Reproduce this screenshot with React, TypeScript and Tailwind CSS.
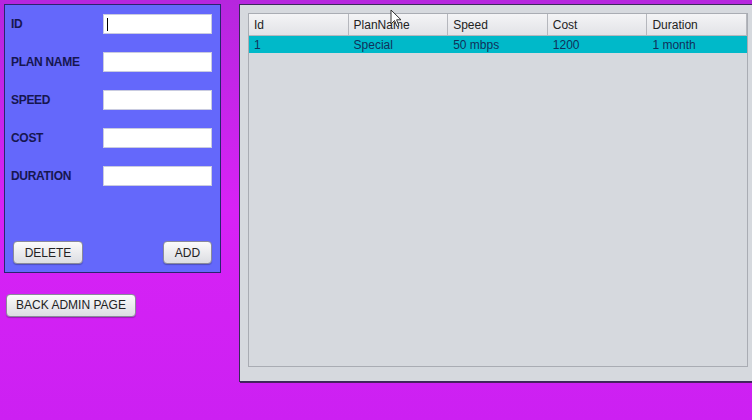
import { ReactNode } from 'react';

const fields = ['ID', 'PLAN NAME', 'SPEED', 'COST', 'DURATION'];
const columns = ['Id', 'PlanName', 'Speed', 'Cost', 'Duration'];
const rows = [['1', 'Special', '50 mbps', '1200', '1 month']];

function SwingButton({ children, className = '' }: { children: ReactNode; className?: string }) {
  return (
    <button
      className={`h-[23px] rounded-[4px] border border-[#8a8a9a] bg-gradient-to-b from-[#fbfbfb] to-[#dcdde2] text-[12px] text-[#222] shadow-[0_1px_1px_rgba(0,0,0,0.25)] ${className}`}
    >
      {children}
    </button>
  );
}

export default function App() {
  return (
    <div
      className="relative w-[752px] h-[420px] overflow-hidden bg-gradient-to-b from-[#b626de] via-[#d822f6] to-[#cc20f2] flex gap-[18px] pl-[4px] pt-[4px]"
      style={{ fontFamily: '"Liberation Sans", Arial, sans-serif' }}
    >
      {/* left column */}
      <div className="flex flex-col w-[217px] shrink-0">
        <div className="h-[269px] bg-[#6468fb] border border-[#2a2470] flex flex-col pl-[6px] pr-[8px] pt-[9px] pb-[8px]">
          <div className="flex flex-col gap-[18px]">
            {fields.map((f, i) => (
              <div key={f} className="flex items-center justify-between h-[20px]">
                <span className="text-[12px] font-bold text-[#161650] tracking-[-0.3px]">{f}</span>
                <div className="w-[109px] h-[20px] bg-white border border-[#c9cbe0] flex items-center pl-[3px]">
                  {i === 0 && <div className="w-px h-[13px] bg-black" />}
                </div>
              </div>
            ))}
          </div>
          <div className="mt-auto flex justify-between pl-[2px]">
            <SwingButton className="w-[70px]">DELETE</SwingButton>
            <SwingButton className="w-[49px]">ADD</SwingButton>
          </div>
        </div>
        <div className="pt-[19px] pl-[2px]">
          <SwingButton className="w-[130px]">BACK ADMIN PAGE</SwingButton>
        </div>
      </div>

      {/* right table panel */}
      <div className="w-[520px] h-[378px] shrink-0 bg-[#d6d9de] border border-[#3a2a5a] shadow-[1px_1px_0_#4a2060] pl-[8px] pt-[8px]">
        <div className="w-[500px] h-[354px] border border-[#a9acb3] bg-[#d6d9de]">
          <div className="flex h-[22px] bg-gradient-to-b from-[#f4f4f6] to-[#e2e3e7] border-b border-[#b5b7bd]">
            {columns.map((c) => (
              <div key={c} className="w-[100px] border-r border-[#b5b7bd] pl-[5px] flex items-center text-[12px] text-[#222]">
                {c}
              </div>
            ))}
          </div>
          {rows.map((r) => (
            <div key={r[0]} className="flex h-[17px] bg-[#00b9c9]">
              {r.map((v, j) => (
                <div key={j} className="w-[100px] pl-[5px] flex items-center text-[12px] text-[#10305a]">
                  {v}
                </div>
              ))}
            </div>
          ))}
        </div>
      </div>

      {/* mouse pointer */}
      <svg className="absolute left-[390px] top-[9px]" width="12" height="19" viewBox="0 0 12 19">
        <path d="M1 1 L1 15 L4.5 11.5 L7 17.5 L9 16.6 L6.6 10.8 L11 10.8 Z" fill="#fff" stroke="#333" strokeWidth="1" strokeLinejoin="round" />
      </svg>
    </div>
  );
}
